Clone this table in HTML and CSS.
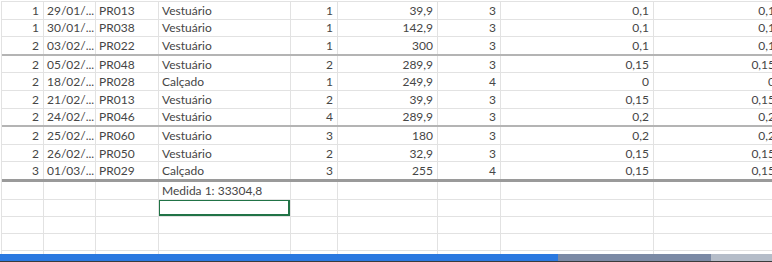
FILE: index.html
```html
<!DOCTYPE html>
<html lang="pt">
<head>
<meta charset="utf-8">
<link rel="stylesheet" href="styles.css">
</head>
<body>
<div class="viewport">
  <div class="sheet">
    <div class="row"><span class="c n">1</span><span class="c">29/01/...</span><span class="c">PR013</span><span class="c">Vestuário</span><span class="c n">1</span><span class="c n">39,9</span><span class="c n">3</span><span class="c n">0,1</span><span class="c n">0,1</span></div>
    <div class="row"><span class="c n">1</span><span class="c">30/01/...</span><span class="c">PR038</span><span class="c">Vestuário</span><span class="c n">1</span><span class="c n">142,9</span><span class="c n">3</span><span class="c n">0,1</span><span class="c n">0,1</span></div>
    <div class="row brk"><span class="c n">2</span><span class="c">03/02/...</span><span class="c">PR022</span><span class="c">Vestuário</span><span class="c n">1</span><span class="c n">300</span><span class="c n">3</span><span class="c n">0,1</span><span class="c n">0,1</span></div>
    <div class="row"><span class="c n">2</span><span class="c">05/02/...</span><span class="c">PR048</span><span class="c">Vestuário</span><span class="c n">2</span><span class="c n">289,9</span><span class="c n">3</span><span class="c n">0,15</span><span class="c n">0,15</span></div>
    <div class="row"><span class="c n">2</span><span class="c">18/02/...</span><span class="c">PR028</span><span class="c">Calçado</span><span class="c n">1</span><span class="c n">249,9</span><span class="c n">4</span><span class="c n">0</span><span class="c n">0</span></div>
    <div class="row"><span class="c n">2</span><span class="c">21/02/...</span><span class="c">PR013</span><span class="c">Vestuário</span><span class="c n">2</span><span class="c n">39,9</span><span class="c n">3</span><span class="c n">0,15</span><span class="c n">0,15</span></div>
    <div class="row brk"><span class="c n">2</span><span class="c">24/02/...</span><span class="c">PR046</span><span class="c">Vestuário</span><span class="c n">4</span><span class="c n">289,9</span><span class="c n">3</span><span class="c n">0,2</span><span class="c n">0,2</span></div>
    <div class="row"><span class="c n">2</span><span class="c">25/02/...</span><span class="c">PR060</span><span class="c">Vestuário</span><span class="c n">3</span><span class="c n">180</span><span class="c n">3</span><span class="c n">0,2</span><span class="c n">0,2</span></div>
    <div class="row"><span class="c n">2</span><span class="c">26/02/...</span><span class="c">PR050</span><span class="c">Vestuário</span><span class="c n">2</span><span class="c n">32,9</span><span class="c n">3</span><span class="c n">0,15</span><span class="c n">0,15</span></div>
    <div class="row end"><span class="c n">3</span><span class="c">01/03/...</span><span class="c">PR029</span><span class="c">Calçado</span><span class="c n">3</span><span class="c n">255</span><span class="c n">4</span><span class="c n">0,15</span><span class="c n">0,15</span></div>
    <div class="row total"><span class="c"></span><span class="c"></span><span class="c"></span><span class="c">Medida 1: 33304,8</span><span class="c"></span><span class="c"></span><span class="c"></span><span class="c"></span><span class="c"></span></div>
    <div class="row empty"><span class="c"></span><span class="c"></span><span class="c"></span><span class="c sel"></span><span class="c"></span><span class="c"></span><span class="c"></span><span class="c"></span><span class="c"></span></div>
    <div class="row empty"><span class="c"></span><span class="c"></span><span class="c"></span><span class="c"></span><span class="c"></span><span class="c"></span><span class="c"></span><span class="c"></span><span class="c"></span></div>
    <div class="row empty"><span class="c"></span><span class="c"></span><span class="c"></span><span class="c"></span><span class="c"></span><span class="c"></span><span class="c"></span><span class="c"></span><span class="c"></span></div>
    <div class="row empty"><span class="c"></span><span class="c"></span><span class="c"></span><span class="c"></span><span class="c"></span><span class="c"></span><span class="c"></span><span class="c"></span><span class="c"></span></div>
  </div>
</div>
<div class="scrollbar">
  <div class="track-a"></div>
  <div class="track-b"></div>
  <div class="track-c"></div>
</div>
<div class="bottom-line"></div>
</body>
</html>
```

FILE: styles.css
```css
html, body {
  margin: 0;
  padding: 0;
  background: #ffffff;
}

body {
  width: 772px;
  height: 262px;
  overflow: hidden;
  font-family: "Lato", "Liberation Sans", sans-serif;
  font-size: 12px;
  color: #464646;
}

.viewport {
  height: 254px;
  overflow: hidden;
}

.sheet {
  margin-top: 1px;
  margin-left: 1px;
  border-top: 1px solid #e2e2e2;
  border-left: 1px solid #e2e2e2;
  width: 800px;
}

.row {
  display: grid;
  grid-template-columns: 42px 52px 63px 132px 47px 100px 63px 153px 126px;
  height: 17.6px;
  box-sizing: border-box;
  border-bottom: 1px solid #e2e2e2;
}

.row.brk {
  height: 18.6px;
  border-bottom: 2px solid #b4b4b4;
}

.row.end {
  height: 19.6px;
  border-bottom: 3px solid #9a9a9a;
}

.row.total {
  height: 18px;
}

.row.empty {
  height: 17px;
}

.c {
  display: flex;
  align-items: center;
  padding: 0 4px 0 3px;
  border-right: 1px solid #e2e2e2;
  white-space: nowrap;
  overflow: hidden;
  position: relative;
}

.c.n {
  justify-content: flex-end;
}

.c.sel::after {
  content: "";
  position: absolute;
  left: -1px;
  top: -1px;
  right: 0;
  bottom: 0;
  border: 2px solid #217346;
}

.scrollbar {
  display: flex;
  height: 7px;
}

.track-a {
  width: 558px;
  background: #2b79e0;
}

.track-b {
  width: 153px;
  background: #7b8aa5;
}

.track-c {
  flex: 1;
  background: #b5bdc9;
}

.bottom-line {
  height: 1px;
  background: #3c3c3c;
}
```
